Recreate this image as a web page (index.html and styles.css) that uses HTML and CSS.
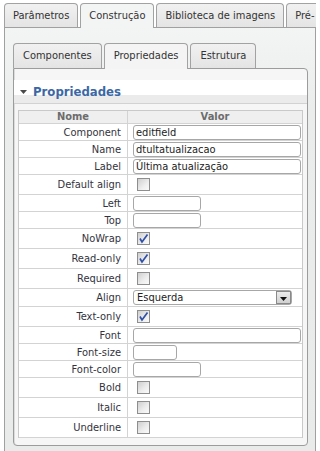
FILE: index.html
```html
<!DOCTYPE html>
<html lang="pt">
<head>
<meta charset="utf-8">
<title>Propriedades</title>
<link rel="stylesheet" href="styles.css">
</head>
<body>
<div class="tabs tabs-outer">
  <div class="tab">Parâmetros</div>
  <div class="tab active">Construção</div>
  <div class="tab">Biblioteca de imagens</div>
  <div class="tab">Pré-</div>
</div>
<div class="outer">
  <div class="tabs tabs-inner">
    <div class="tab">Componentes</div>
    <div class="tab active">Propriedades</div>
    <div class="tab">Estrutura</div>
  </div>
  <div class="inner">
    <div class="section-head">
      <svg class="tri" width="7" height="4" viewBox="0 0 7 4"><polygon points="0,0 7,0 3.5,4" fill="#4a4a4a"/></svg>
      <span>Propriedades</span>
    </div>
    <div class="table-wrap">
      <table class="props">
        <tr class="head"><th><div class="c">Nome</div></th><th><div class="c">Valor</div></th></tr>
        <tr><td class="k"><div class="kd">Component</div></td><td><div class="vd"><input class="txt full" value="editfield"></div></td></tr>
        <tr><td class="k"><div class="kd">Name</div></td><td><div class="vd"><input class="txt full" value="dtultatualizacao"></div></td></tr>
        <tr><td class="k"><div class="kd">Label</div></td><td><div class="vd"><input class="txt full" value="Última atualização"></div></td></tr>
        <tr><td class="k"><div class="kd cb-row">Default align</div></td><td><div class="vd cb-row"><span class="cb"></span></div></td></tr>
        <tr><td class="k"><div class="kd">Left</div></td><td><div class="vd"><input class="txt w68" value=""></div></td></tr>
        <tr><td class="k"><div class="kd">Top</div></td><td><div class="vd"><input class="txt w68" value=""></div></td></tr>
        <tr><td class="k"><div class="kd cb-row">NoWrap</div></td><td><div class="vd cb-row"><span class="cb"><svg width="11" height="11" viewBox="0 0 11 11"><path d="M2 5.5 L4 9 L9.5 1.5" fill="none" stroke="#3050a8" stroke-width="1.7"/></svg></span></div></td></tr>
        <tr><td class="k"><div class="kd cb-row">Read-only</div></td><td><div class="vd cb-row"><span class="cb"><svg width="11" height="11" viewBox="0 0 11 11"><path d="M2 5.5 L4 9 L9.5 1.5" fill="none" stroke="#3050a8" stroke-width="1.7"/></svg></span></div></td></tr>
        <tr><td class="k"><div class="kd cb-row">Required</div></td><td><div class="vd cb-row"><span class="cb"></span></div></td></tr>
        <tr><td class="k"><div class="kd sel-row">Align</div></td><td><div class="vd sel-row"><div class="select"><span class="sel-text">Esquerda</span><span class="sel-btn"><svg width="7" height="4" viewBox="0 0 7 4"><polygon points="0,0 7,0 3.5,4" fill="#111"/></svg></span></div></div></td></tr>
        <tr><td class="k"><div class="kd cb-row">Text-only</div></td><td><div class="vd cb-row"><span class="cb"><svg width="11" height="11" viewBox="0 0 11 11"><path d="M2 5.5 L4 9 L9.5 1.5" fill="none" stroke="#3050a8" stroke-width="1.7"/></svg></span></div></td></tr>
        <tr><td class="k"><div class="kd">Font</div></td><td><div class="vd"><input class="txt full" value=""></div></td></tr>
        <tr><td class="k"><div class="kd">Font-size</div></td><td><div class="vd"><input class="txt w44" value=""></div></td></tr>
        <tr><td class="k"><div class="kd">Font-color</div></td><td><div class="vd"><input class="txt w68" value=""></div></td></tr>
        <tr><td class="k"><div class="kd cb-row">Bold</div></td><td><div class="vd cb-row"><span class="cb"></span></div></td></tr>
        <tr><td class="k"><div class="kd cb-row">Italic</div></td><td><div class="vd cb-row"><span class="cb"></span></div></td></tr>
        <tr><td class="k"><div class="kd cb-row">Underline</div></td><td><div class="vd cb-row"><span class="cb"></span></div></td></tr>
      </table>
    </div>
  </div>
</div>
</body>
</html>
```
FILE: styles.css
```css
html, body {
  margin: 0;
  background: #ffffff;
}
body {
  padding: 3px 0 0 4px;
  width: 316px;
  height: 451px;
  box-sizing: border-box;
  overflow: hidden;
  font-family: "DejaVu Sans Condensed", "DejaVu Sans", sans-serif;
  font-stretch: condensed;
  font-size: 11px;
  color: #333333;
}

/* tabs */
.tabs {
  display: flex;
  align-items: flex-start;
  gap: 2px;
  margin-bottom: -1px;
  white-space: nowrap;
}
.tabs-outer {
  width: 312px;
  overflow: hidden;
}
.tab {
  flex-shrink: 0;
  border: 1px solid #a2a2a2;
  border-bottom: 0;
  border-radius: 4px 4px 0 0;
  background: linear-gradient(#f1f1f1, #e4e4e4);
  color: #333333;
  padding: 0 9px;
}
.tabs-outer .tab {
  height: 23px;
  line-height: 23px;
  padding: 0 8px;
}
.tabs-outer .tab.active {
  height: 24px;
  background: #f3f4f4;
  position: relative;
  z-index: 1;
}
.tabs-inner .tab {
  height: 24px;
  line-height: 24px;
}
.tabs-inner .tab.active {
  height: 25px;
  background: #f4f4f4;
  position: relative;
  z-index: 1;
}

/* outer panel */
.outer {
  width: 312px;
  box-sizing: border-box;
  height: 424px;
  border: 1px solid #a0a0a0;
  border-bottom: 0;
  background: linear-gradient(#f3f4f4, #ebecec 80px, #e9eaea);
  padding: 15px 7px 0 8px;
}

/* inner panel */
.inner {
  border: 1px solid #9c9c9c;
  border-radius: 0 4px 4px 4px;
  background: #f6f6f6;
  box-shadow: inset 1px 0 0 #dcdcdc;
  padding: 11px 0 7px 0;
}
.section-head {
  height: 23px;
  border-bottom: 1px solid #d2d2d2;
  background: linear-gradient(#ffffff 0, #ffffff 15px, #ebebeb 15px, #ebebeb 23px);
  display: flex;
  align-items: center;
  padding-left: 6px;
  font-size: 13px;
  font-weight: bold;
  color: #3b67a5;
}
.section-head .tri {
  margin-right: 6px;
  margin-top: 1px;
}
.table-wrap {
  padding: 6px 4px 0 4px;
}

/* table */
.props {
  width: 100%;
  border-collapse: separate;
  border-spacing: 0;
  border: 1px solid #c9c9c9;
  border-bottom: 0;
  background: #ffffff;
}
.props th, .props td {
  padding: 0;
  border-bottom: 1px solid #d3d3d3;
}
.props th:first-child, .props td.k {
  border-right: 1px solid #d3d3d3;
  width: 108px;
}
.props .head th {
  background: #efefef;
  color: #6c6c6c;
  font-weight: bold;
}
.c {
  height: 12px;
  line-height: 12px;
  text-align: center;
}
.kd {
  height: 16px;
  display: flex;
  align-items: center;
  justify-content: flex-end;
  padding-right: 6px;
  color: #333340;
}
.vd {
  height: 16px;
  display: flex;
  align-items: center;
  padding: 0 1px 0 5px;
}
.cb-row {
  height: 19px;
}
.sel-row {
  height: 17px;
}

/* inputs */
.txt {
  box-sizing: border-box;
  height: 15px;
  margin: 0;
  border: 1px solid #a7a7a7;
  border-radius: 3px;
  padding: 0 2px;
  background: #ffffff;
  font-family: inherit;
  font-stretch: condensed;
  font-size: 11px;
  color: #222222;
  outline: none;
}
.full { width: 100%; }
.w68 { width: 68px; }
.w44 { width: 44px; }

.cb {
  box-sizing: border-box;
  width: 13px;
  height: 13px;
  margin-left: 4px;
  border: 1px solid #8e8e8e;
  background: linear-gradient(135deg, #cfcfcf, #eeeeee 60%, #fafafa);
  display: flex;
  align-items: center;
  justify-content: center;
}

.select {
  box-sizing: border-box;
  width: 159px;
  height: 15px;
  border: 1px solid #a7a7a7;
  border-radius: 3px;
  background: #ffffff;
  display: flex;
  align-items: center;
  justify-content: space-between;
  padding-left: 3px;
  color: #222222;
}
.sel-btn {
  box-sizing: border-box;
  width: 15px;
  height: 13px;
  border: 1px solid #8a8a8a;
  background: linear-gradient(#ececec, #d0d0d0);
  display: flex;
  align-items: center;
  justify-content: center;
  padding-top: 3px;
}
```
